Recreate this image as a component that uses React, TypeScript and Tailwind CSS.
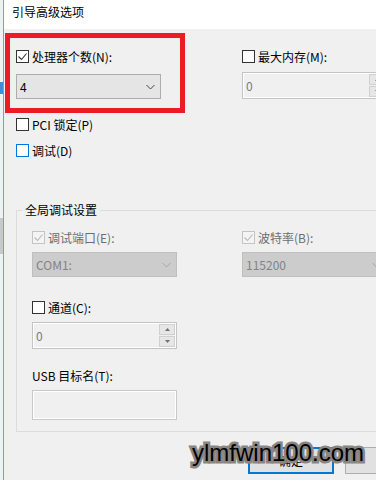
import React from "react";

function Check({ color }: { color: string }) {
  return (
    <svg width="11" height="11" viewBox="0 0 11 11" className="block">
      <path d="M1.5 5.5 L4.5 8.5 L9.5 2.5" fill="none" stroke={color} strokeWidth="1.1" />
    </svg>
  );
}

function Box({ checked, disabled, focus }: { checked?: boolean; disabled?: boolean; focus?: boolean }) {
  const cls = disabled
    ? "border-[#c4c4c4] bg-[#f4f4f4]"
    : focus
    ? "border-[#0078d7] bg-white"
    : "border-[#333333] bg-white";
  return (
    <span className={`w-[13px] h-[13px] shrink-0 border ${cls} flex items-center justify-center`}>
      {checked ? <Check color={disabled ? "#b8b8b8" : "#333333"} /> : null}
    </span>
  );
}

function CheckRow({
  label,
  checked,
  disabled,
  focus,
}: {
  label: string;
  checked?: boolean;
  disabled?: boolean;
  focus?: boolean;
}) {
  return (
    <div className="flex items-center gap-[3px] h-[13px]">
      <Box checked={checked} disabled={disabled} focus={focus} />
      <span className={`whitespace-nowrap ${disabled ? "text-[#6d6d6d]" : "text-black"}`}>{label}</span>
    </div>
  );
}

function Chevron({ color }: { color: string }) {
  return (
    <svg width="9" height="6" viewBox="0 0 9 6" className="block">
      <path d="M0.5 1 L4.5 5 L8.5 1" fill="none" stroke={color} strokeWidth="1" />
    </svg>
  );
}

function Combo({ value, disabled }: { value: string; disabled?: boolean }) {
  return (
    <div
      className={`h-[25px] w-[145px] border flex items-center justify-between pl-[3px] pr-[5px] ${
        disabled ? "border-[#bfbfbf] bg-[#cccccc] text-[#838383]" : "border-[#adadad] bg-[#e5e5e5] text-black"
      }`}
    >
      <span>{value}</span>
      <Chevron color={disabled ? "#a6a6a6" : "#444444"} />
    </div>
  );
}

function Spin({ value }: { value: string }) {
  return (
    <div className="h-[27px] w-[145px] border border-[#c4c4c4] bg-[#f0f0f0] shadow-[inset_0_0_0_1px_#ffffff] flex">
      <div className="flex-1 flex items-center pl-[3px] text-[#7a7a7a]">{value}</div>
      <div className="w-[17px] flex flex-col gap-[1px] p-[1px] pl-0">
        <div className="flex-1 bg-[#e6e6e6] border border-[#d0d0d0] flex items-center justify-center">
          <svg width="5" height="3" viewBox="0 0 5 3" className="block">
            <path d="M0 3 L2.5 0 L5 3 Z" fill="#707070" />
          </svg>
        </div>
        <div className="flex-1 bg-[#e6e6e6] border border-[#d0d0d0] flex items-center justify-center">
          <svg width="5" height="3" viewBox="0 0 5 3" className="block">
            <path d="M0 0 L2.5 3 L5 0 Z" fill="#707070" />
          </svg>
        </div>
      </div>
    </div>
  );
}

export default function App() {
  return (
    <div className="relative w-[376px] h-[480px] overflow-hidden flex bg-[#f0f0f0] font-['Noto_Sans_CJK_SC',sans-serif] text-[12px] leading-[16px] text-black">
      <div className="w-[4px] shrink-0 border-r border-[#8a9bb4] bg-[#eef1f5] flex flex-col">
        <div className="h-[82px]" />
        <div className="h-[12px] bg-[#3d8fd6]" />
        <div className="h-[124px]" />
        <div className="h-[36px] bg-[#c9c9c9]" />
        <div className="flex-1" />
      </div>
      <div className="flex flex-col w-[600px] shrink-0">
        <div className="h-[29px] bg-white pt-[4px] pl-[8px] whitespace-nowrap">引导高级选项</div>
        <div className="flex-1 bg-[#f0f0f0] pl-[12px] pt-[21px]">
          <div className="grid grid-cols-[145px_145px] gap-x-[81px]">
            <div className="flex flex-col">
              <CheckRow label="处理器个数(N):" checked />
              <div className="mt-[11px]">
                <Combo value="4" />
              </div>
            </div>
            <div className="flex flex-col">
              <CheckRow label="最大内存(M):" />
              <div className="mt-[9px]">
                <Spin value="0" />
              </div>
            </div>
          </div>
          <div className="mt-[19px]">
            <CheckRow label="PCI 锁定(P)" />
          </div>
          <div className="mt-[13px]">
            <CheckRow label="调试(D)" focus />
          </div>
          <fieldset className="mt-[45px] w-[520px] border border-[#dcdcdc]">
            <legend className="ml-[5px] px-[3px] leading-[16px]">全局调试设置</legend>
            <div className="pt-[13px] pl-[15px] pb-[11px] grid grid-cols-[145px_145px] gap-x-[65px]">
              <div className="flex flex-col">
                <CheckRow label="调试端口(E):" checked disabled />
                <div className="mt-[8px]">
                  <Combo value="COM1:" disabled />
                </div>
                <div className="mt-[24px]">
                  <CheckRow label="通道(C):" />
                </div>
                <div className="mt-[8px]">
                  <Spin value="0" />
                </div>
                <div className="mt-[19px] whitespace-nowrap">USB 目标名(T):</div>
                <div className="mt-[6px] h-[30px] w-[145px] border border-[#c8c8c8] bg-[#f0f0f0] shadow-[inset_0_0_0_1px_#ffffff]" />
              </div>
              <div className="flex flex-col">
                <CheckRow label="波特率(B):" checked disabled />
                <div className="mt-[8px]">
                  <Combo value="115200" disabled />
                </div>
              </div>
            </div>
          </fieldset>
          <div className="mt-[15px] flex gap-[11px] pl-[232px]">
            <div className="h-[27px] w-[86px] shrink-0 border-2 border-[#0078d7] bg-[#e1e1e1] flex items-center justify-center">
              确定
            </div>
            <div className="h-[27px] w-[86px] shrink-0 border border-[#adadad] bg-[#e1e1e1] flex items-center justify-center">
              取消
            </div>
          </div>
        </div>
      </div>
      <div className="absolute left-[5px] top-[33px] w-[180px] h-[80px] border-[5px] border-[#ed1c24]" />
      <div className="absolute left-[192px] top-[441px] text-[24px] leading-none font-['Liberation_Sans',sans-serif] text-black whitespace-nowrap [-webkit-text-stroke:5px_#8a8582] [paint-order:stroke_fill]">
        ylmfwin100.com
      </div>
    </div>
  );
}
